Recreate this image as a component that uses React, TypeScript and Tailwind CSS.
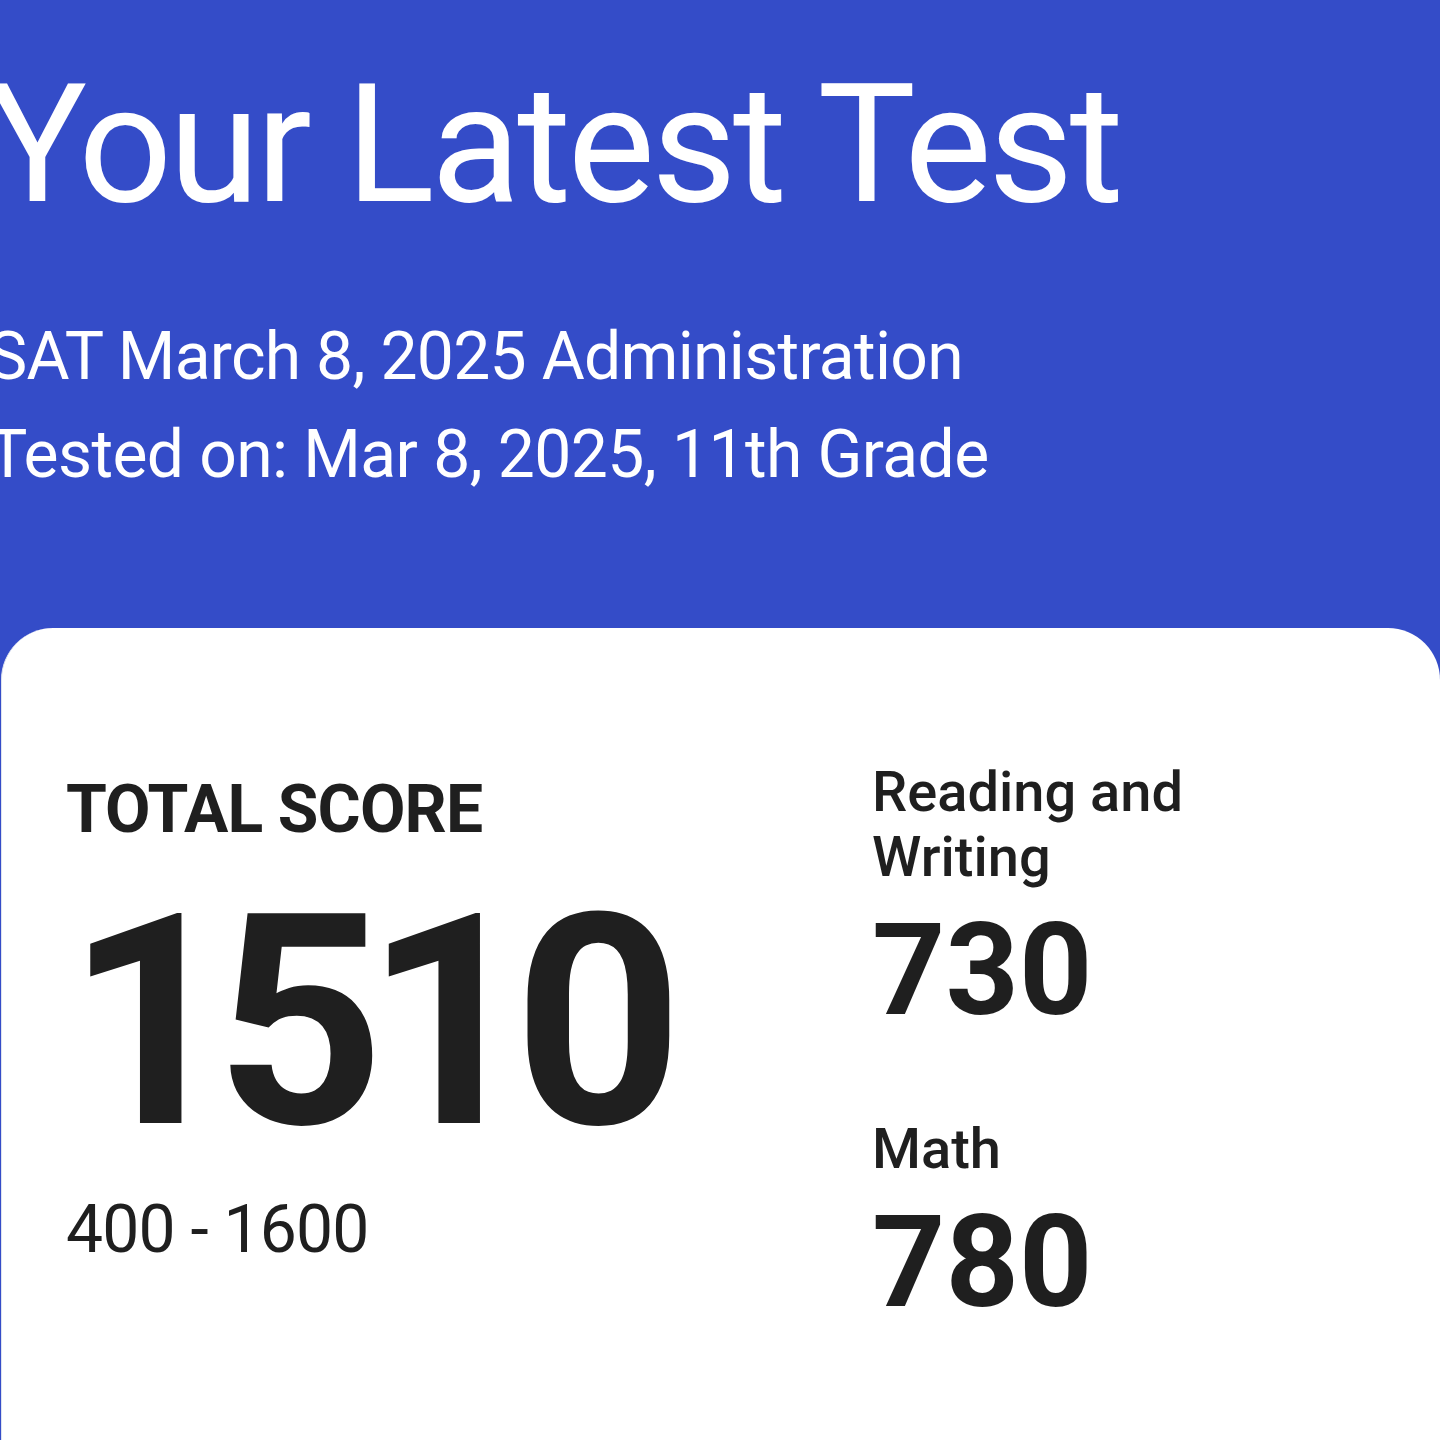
import React from 'react';

const font = { fontFamily: 'Roboto, "Noto Sans", Arial, sans-serif' };

interface SectionScoreProps {
  label: React.ReactNode;
  score: number;
  className?: string;
}

function SectionScore({ label, score, className }: SectionScoreProps) {
  return (
    <div className={className}>
      <p className="text-[56px] font-medium leading-[65px] text-[#1f1f1f]">{label}</p>
      <p className="mt-[25px] text-[128px] font-bold leading-[110px] text-[#1f1f1f]">{score}</p>
    </div>
  );
}

export default function App() {
  return (
    <div className="min-h-[1440px] w-[1440px] overflow-hidden bg-[#344cc8]" style={font}>
      <header className="ml-[-12px] pt-[60px] text-white">
        <h1 className="text-[165px] font-normal leading-[170px] tracking-[-3.6px]">Your Latest Test</h1>
        <p className="mt-[78px] text-[66px] leading-[98px] tracking-[-0.7px]">SAT March 8, 2025 Administration</p>
        <p className="text-[66px] leading-[98px] tracking-[-0.6px]">Tested on: Mar 8, 2025, 11th Grade</p>
      </header>

      <section className="ml-[1px] mt-[124px] flex min-h-[812px] rounded-t-[52px] border-l border-[#dfe3ee] bg-white pl-[64px] pt-[142px]">
        <div className="w-[806px]">
          <p className="text-[66px] font-bold leading-[80px] tracking-[-0.9px] text-[#1f1f1f]">TOTAL SCORE</p>
          <p className="mt-[52px] text-[295px] font-bold leading-[240px] tracking-[-20px] text-[#1f1f1f]">1510</p>
          <p className="mt-[48px] text-[66px] leading-[80px] tracking-[-0.8px] text-[#1f1f1f]">400 - 1600</p>
        </div>
        <div className="-mt-[10px]">
          <SectionScore
            label={
              <>
                Reading and
                <br />
                Writing
              </>
            }
            score={730}
          />
          <SectionScore label="Math" score={780} className="mt-[92px]" />
        </div>
      </section>
    </div>
  );
}
